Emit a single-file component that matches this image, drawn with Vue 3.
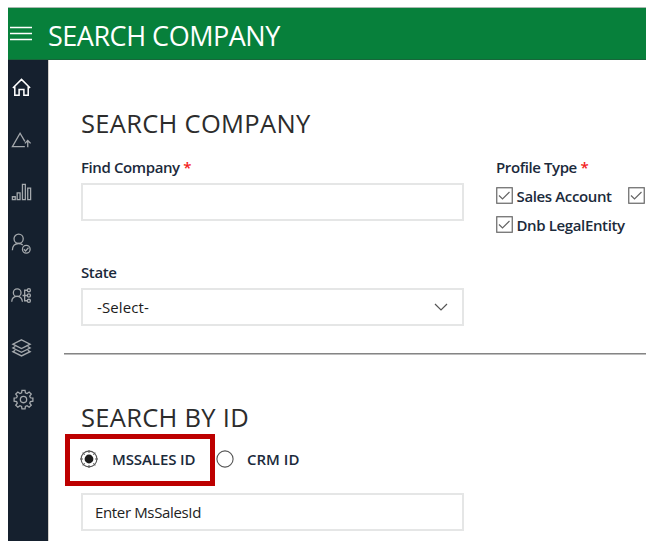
<script setup>
import { ref } from 'vue'

const profiles = [
  { label: 'Sales Account', cls: 'sales' },
  { label: '', cls: '' },
  { label: 'Dnb LegalEntity', cls: 'dnb' }
]
const idType = ref('mssales')
const ticks = [0, 45, 90, 135, 180, 225, 270, 315]
</script>

<template>
  <div class="window">
    <header class="topbar">
      <svg class="burger" width="24" height="18" viewBox="0 0 24 18">
        <path d="M0 2.5H22M0 8.5H22M0 14.5H22" />
      </svg>
      <span class="title">SEARCH COMPANY</span>
    </header>
    <div class="body">
      <nav class="side">
        <a class="item active">
          <svg viewBox="0 0 24 24"><path d="M3 12.5L12 3.5L21 12.5M5 11V20H9.5V14H14.5V20H19V11" /></svg>
        </a>
        <a class="item">
          <svg viewBox="0 0 24 24"><path d="M15.5 19.5H2.5L10.5 5.5L15.5 14M18.5 20V13M15.5 16L18.5 13L21.5 16" /></svg>
        </a>
        <a class="item">
          <svg viewBox="0 0 24 24"><path d="M2.5 17.5H5.5V20.5H2.5ZM7.5 13.5H10.5V20.5H7.5ZM13 4.5H16V20.5H13ZM18.5 8.5H21.5V20.5H18.5Z" /></svg>
        </a>
        <a class="item">
          <svg viewBox="0 0 24 24"><circle cx="9" cy="7" r="4.8" /><path d="M2.5 19C2.5 14.5 5 12 9 12C10.8 12 12.3 12.5 13.3 13.5M14.5 18L16.3 19.8L19.3 16.3" /><circle cx="17" cy="18" r="4" /></svg>
        </a>
        <a class="item">
          <svg viewBox="0 0 24 24"><circle cx="7.5" cy="9" r="4" /><path d="M1.8 18.5C2 15 4 13 7.5 13S12.5 15 13 18.5M13 12H18M18 6.5H15.3V17.5H18" /><circle cx="19.7" cy="6.5" r="1.6" /><circle cx="19.7" cy="12" r="1.6" /><circle cx="19.7" cy="17.5" r="1.6" /></svg>
        </a>
        <a class="item">
          <svg viewBox="0 0 24 24"><path d="M12 4L21 8.5L12 13L3 8.5ZM5.5 11L3 12.5L12 17L21 12.5L18.5 11M5.5 15L3 16.3L12 20.8L21 16.3L18.5 15" /></svg>
        </a>
        <a class="item gear">
          <svg viewBox="0 0 24 24">
            <path d="M10.4 2.4H13.6L14 5.1L15.7 5.8L17.9 4.2L20.1 6.4L18.5 8.5L19.2 10.2L21.8 10.6V13.7L19.2 14.1L18.5 15.8L20.1 18L17.9 20.1L15.7 18.5L14 19.2L13.6 21.8H10.4L10 19.2L8.3 18.5L6.1 20.1L3.9 18L5.5 15.8L4.8 14.1L2.2 13.7V10.6L4.8 10.2L5.5 8.5L3.9 6.4L6.1 4.2L8.3 5.8L10 5.1Z" />
            <circle cx="12" cy="12.1" r="3.3" />
          </svg>
        </a>
      </nav>
      <main class="content">
        <section class="search">
          <h1 class="heading">SEARCH COMPANY</h1>
          <div class="columns">
            <div class="left">
              <div class="label">Find Company <b class="req">*</b></div>
              <div class="field"></div>
              <div class="label state">State</div>
              <div class="field select">
                <span>-Select-</span>
                <svg width="14" height="8" viewBox="0 0 14 8"><path d="M1 1L7 7L13 1" /></svg>
              </div>
            </div>
            <div class="right">
              <div class="label">Profile Type <b class="req">*</b></div>
              <div class="checks">
                <label v-for="(p, i) in profiles" :key="i" class="check">
                  <svg width="17" height="17" viewBox="0 0 17 17"><rect x=".75" y=".75" width="15.5" height="15.5" /><path d="M3 8.5L6.5 12L13.5 5" /></svg>
                  <span :class="p.cls">{{ p.label }}</span>
                </label>
              </div>
            </div>
          </div>
        </section>
        <section class="byid">
          <h1 class="heading">SEARCH BY ID</h1>
          <div class="radios">
            <label class="radio first" @click="idType = 'mssales'">
              <svg width="18" height="18" viewBox="0 0 18 18">
                <circle cx="9" cy="9" r="7.9" class="ring" />
                <path v-for="t in ticks" :key="t" d="M9 0V3" class="tick" :transform="`rotate(${t} 9 9)`" />
                <circle v-if="idType === 'mssales'" cx="9" cy="9" r="4.4" class="dot" />
              </svg>
              <span class="ms">MSSALES ID</span>
            </label>
            <label class="radio" @click="idType = 'crm'">
              <svg width="18" height="18" viewBox="0 0 18 18">
                <circle cx="9" cy="9" r="8.1" class="ring" />
                <circle v-if="idType === 'crm'" cx="9" cy="9" r="4.4" class="dot" />
              </svg>
              <span class="crm">CRM ID</span>
            </label>
            <div class="highlight"></div>
          </div>
          <div class="field idfield"><span>Enter MsSalesId</span></div>
        </section>
      </main>
    </div>
  </div>
</template>

<style>
body { background: #fff; }
</style>

<style scoped>
* { box-sizing: border-box; }
.window {
  width: 638px; height: 534px; margin: 7px 0 0 8px; overflow: hidden;
  display: flex; flex-direction: column;
  font-family: "Open Sans", "Noto Sans", sans-serif; font-size: 15px; color: #222;
}
.topbar {
  height: 53px; flex: none; display: flex; align-items: center;
  background: #07803b; border-top: 1px solid #a9b8af; border-bottom: 1px solid #17663a; color: #fff;
}
.burger { margin-left: 2px; flex: none; stroke: #fff; stroke-width: 1.3; fill: none; }
.title { margin-left: 14px; padding-top: 4px; font-size: 27px; line-height: 40px; white-space: nowrap; letter-spacing: -.48px; }
.body { flex: 1; display: flex; min-height: 0; }
.side { width: 41px; flex: none; background: #15202e; border-right: 1px solid #d2cfca; padding-top: 1px; }
.item { height: 52px; display: flex; align-items: center; padding-left: 2px; }
.item svg { width: 23px; height: 23px; fill: none; stroke: #a5a9ad; stroke-width: 1.35; }
.item.active svg { stroke: #fff; stroke-width: 1.6; }
.item.gear { padding-left: 4px; }
.content { flex: 1; min-width: 0; }
.search { height: 294px; margin-left: 15px; padding: 43px 0 0 17px; border-bottom: 1px solid #858585; box-shadow: 0 1px 0 #bdbdbd; }
.heading { margin: 0; height: 40px; font-size: 25.5px; line-height: 40px; font-weight: 400; color: #2c2c2c; white-space: nowrap; letter-spacing: .3px; }
.columns { display: flex; padding-top: 14px; }
.left { width: 383px; margin-right: 32px; flex: none; }
.right { width: 210px; flex: none; }
.label { height: 26px; line-height: 20px; font-weight: 600; color: #1b2a3b; white-space: nowrap; letter-spacing: -.4px; }
.req { color: #f32020; font-weight: 600; }
.field { height: 38px; border: 2px solid #e5e6e6; display: flex; align-items: center; background: #fff; }
.label.state { margin-top: 41px; }
.select { justify-content: space-between; padding: 0 14px; color: #1b1b1b; letter-spacing: .1px; }
.select svg { fill: none; stroke: #555; stroke-width: 1.2; }
.checks { display: grid; grid-template-columns: 132px 60px; row-gap: 12px; padding-top: 4px; }
.check { display: flex; align-items: center; height: 17px; font-weight: 600; color: #1b2a3b; white-space: nowrap; letter-spacing: -.37px; }
.check svg { flex: none; margin-right: 3.5px; fill: none; stroke: #666; stroke-width: 1.2; }
.check span { padding-top: 1px; }
.byid { padding: 43px 0 0 32px; }
.radios { position: relative; height: 44px; display: flex; align-items: center; font-weight: 600; color: #1b2a3b; white-space: nowrap; }
.radio { display: flex; align-items: center; gap: 14px; }
.radio.first { width: 136px; margin-left: -1px; }
.radio + .radio { gap: 13px; }
.radio svg { flex: none; fill: none; }
.ring { stroke: #555; stroke-width: 1.1; }
.tick { stroke: #555; stroke-width: 1; }
.dot { fill: #1c1c1c; }
.ms { letter-spacing: -.1px; }
.highlight { position: absolute; left: -16px; top: -3px; width: 150px; height: 52px; border: 5px solid #bd0000; }
.idfield { width: 383px; margin-top: 12px; padding-left: 12px; letter-spacing: -.35px; }
</style>
